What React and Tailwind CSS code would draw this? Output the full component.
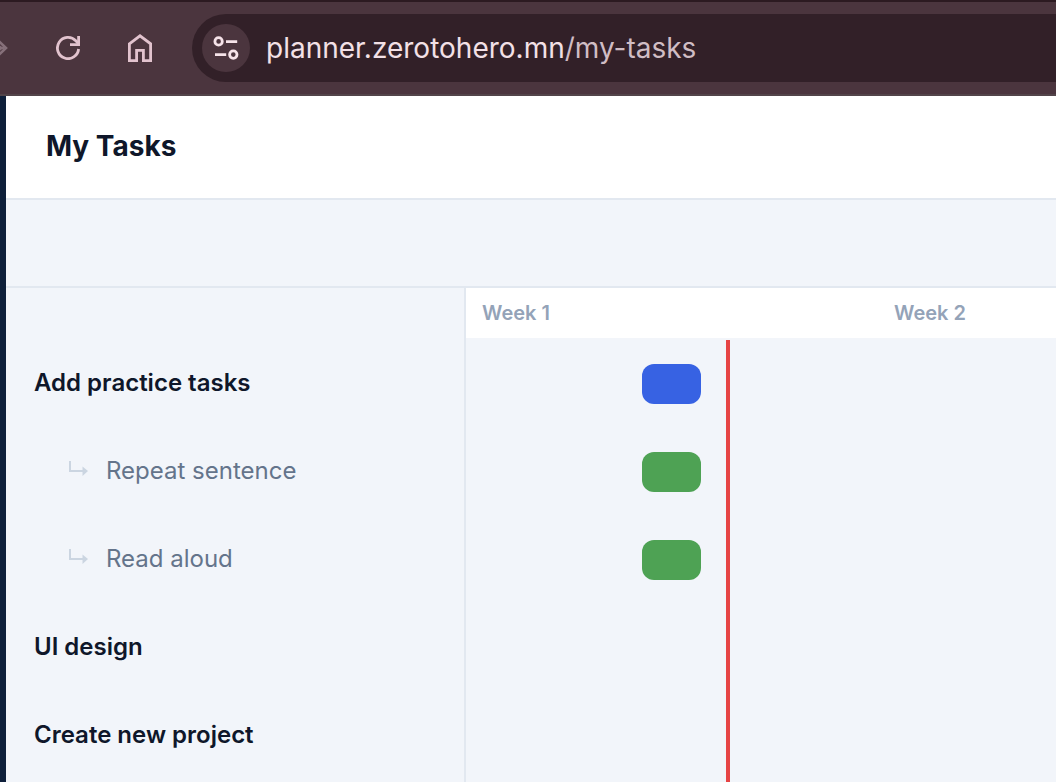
const DAY_WIDTH = 59;

const weeks = ["Week 1", "Week 2"];

const tasks = [
    { id: 1, name: "Add practice tasks", start: 3, days: 1, color: "bg-[#3762e3]" },
    { id: 2, name: "Repeat sentence", sub: true, start: 3, days: 1, color: "bg-[#4ea254]" },
    { id: 3, name: "Read aloud", sub: true, start: 3, days: 1, color: "bg-[#4ea254]" },
    { id: 4, name: "UI design" },
    { id: 5, name: "Create new project" },
];

function ForwardIcon() {
    return (
        <svg viewBox="0 0 24 24" className="size-6 shrink-0" fill="none" stroke="currentColor" strokeWidth="2.6">
            <path d="M0 12h20" />
            <path d="M14.5 4.8 22 12l-7.5 7.2" />
            <path d="M15 8.5v7l4-3.5Z" fill="currentColor" stroke="none" />
        </svg>
    );
}

function ReloadIcon() {
    return (
        <svg viewBox="0 0 24 24" className="size-6" fill="none" stroke="currentColor" strokeWidth="2.8">
            <path d="M22.6 13A10.6 10.6 0 1 1 19.8 4.8l2.4 2.6" />
            <path d="M22.600 0v8.600H14" />
        </svg>
    );
}

function HomeIcon() {
    return (
        <svg viewBox="0 0 24 28" className="h-7 w-6" fill="none" stroke="currentColor" strokeWidth="2.8">
            <path d="M1.4 9.8 12 1.8l10.600 8v16.800h-7.200V16.400H8.600v10.200H1.400Z" />
        </svg>
    );
}

function SiteSettingsIcon() {
    return (
        <svg viewBox="0 0 26 24" className="h-6 w-[26px]" fill="none" stroke="currentColor" strokeWidth="2.8">
            <circle cx="5.6" cy="5.4" r="3.7" />
            <path d="M13 5.6h11.2M2 18.6h11.2" />
            <circle cx="20.3" cy="18.6" r="3.7" />
        </svg>
    );
}

function SubtaskArrow() {
    return (
        <svg viewBox="0 0 20 20" className="size-5 shrink-0 text-[#cbd5e1]" aria-hidden="true">
            <path d="M2 0v10h13" fill="none" stroke="currentColor" strokeWidth="2" />
            <path d="M14.5 5.5 20 10l-5.500 5Z" fill="currentColor" />
        </svg>
    );
}

function BrowserBar() {
    return (
        <div className="flex h-24 shrink-0 items-center border-t-2 border-b-2 border-t-[#2c1a21] border-b-[#524449] bg-[#4b353e] text-[#e2c3ce]">
            <button type="button" aria-label="Forward" disabled className="-ml-10 flex w-12 justify-end overflow-hidden text-[#86707a]">
                <ForwardIcon />
            </button>
            <button type="button" aria-label="Reload" className="ml-12">
                <ReloadIcon />
            </button>
            <button type="button" aria-label="Home" className="ml-12">
                <HomeIcon />
            </button>
            <div className="ml-10 flex h-[68px] min-w-0 flex-1 items-center gap-4 rounded-l-full bg-[#322028] pl-[10px]">
                <button
                    type="button"
                    aria-label="View site information"
                    className="flex size-12 shrink-0 items-center justify-center rounded-full bg-[#4b353e] text-[#f6e3e9]"
                >
                    <SiteSettingsIcon />
                </button>
                <div
                    role="textbox"
                    aria-label="Address"
                    contentEditable
                    suppressContentEditableWarning
                    spellCheck={false}
                    className="min-w-0 flex-1 whitespace-nowrap text-[28px] leading-9 text-[#f3e0e6] outline-none"
                >
                    planner.zerotohero.mn<span className="text-[#d0bdc4]">/my-tasks</span>
                </div>
            </div>
        </div>
    );
}

function TaskList() {
    return (
        <ul className="w-[460px] shrink-0 border-r-2 border-[#e2e8f0] pt-[50px]">
            {tasks.map((task) =>
                task.sub ? (
                    <li key={task.id} className="flex h-[88px] items-center gap-[18px] pt-[2px] pl-[62px] text-2xl text-[#64748b]">
                        <SubtaskArrow />
                        {task.name}
                    </li>
                ) : (
                    <li key={task.id} className="flex h-[88px] items-center pt-[2px] pl-7 text-2xl font-semibold text-[#0f172a]">
                        {task.name}
                    </li>
                )
            )}
        </ul>
    );
}

function Timeline() {
    return (
        <div className="relative min-w-0 flex-1 overflow-hidden">
            <div className="flex h-[50px] items-center bg-white">
                {weeks.map((week) => (
                    <div key={week} className="w-[412px] shrink-0 pl-4 text-xl font-semibold text-[#94a3b8]">
                        {week}
                    </div>
                ))}
            </div>
            {tasks.map((task) => (
                <div key={task.id} className="flex h-[88px] items-center pt-1">
                    {task.color && (
                        <div
                            className={`h-10 rounded-xl ${task.color}`}
                            style={{ marginLeft: task.start * DAY_WIDTH - 1, width: task.days * DAY_WIDTH }}
                        />
                    )}
                </div>
            ))}
            {/* today marker */}
            <div className="absolute top-[52px] bottom-0 left-[260px] w-1 bg-[#e64444]" />
        </div>
    );
}

export default function App() {
    return (
        <div className="flex h-screen flex-col overflow-hidden font-['Inter',sans-serif]">
            <BrowserBar />
            <div className="flex min-h-0 flex-1">
                <div className="w-[6px] shrink-0 bg-[#0e1f3a]" />
                <main className="flex min-w-0 flex-1 flex-col bg-[#f2f5fa]">
                    <header className="flex h-[104px] shrink-0 items-center border-b-2 border-[#e2e8f0] bg-white px-10 pb-[2px]">
                        <h1 className="text-[28px] font-bold text-[#0f172a]">My Tasks</h1>
                    </header>
                    <div className="h-[88px] shrink-0 border-b-2 border-[#e2e8f0]" />
                    <div className="flex min-h-0 flex-1 overflow-hidden">
                        <TaskList />
                        <Timeline />
                    </div>
                </main>
            </div>
        </div>
    );
}
